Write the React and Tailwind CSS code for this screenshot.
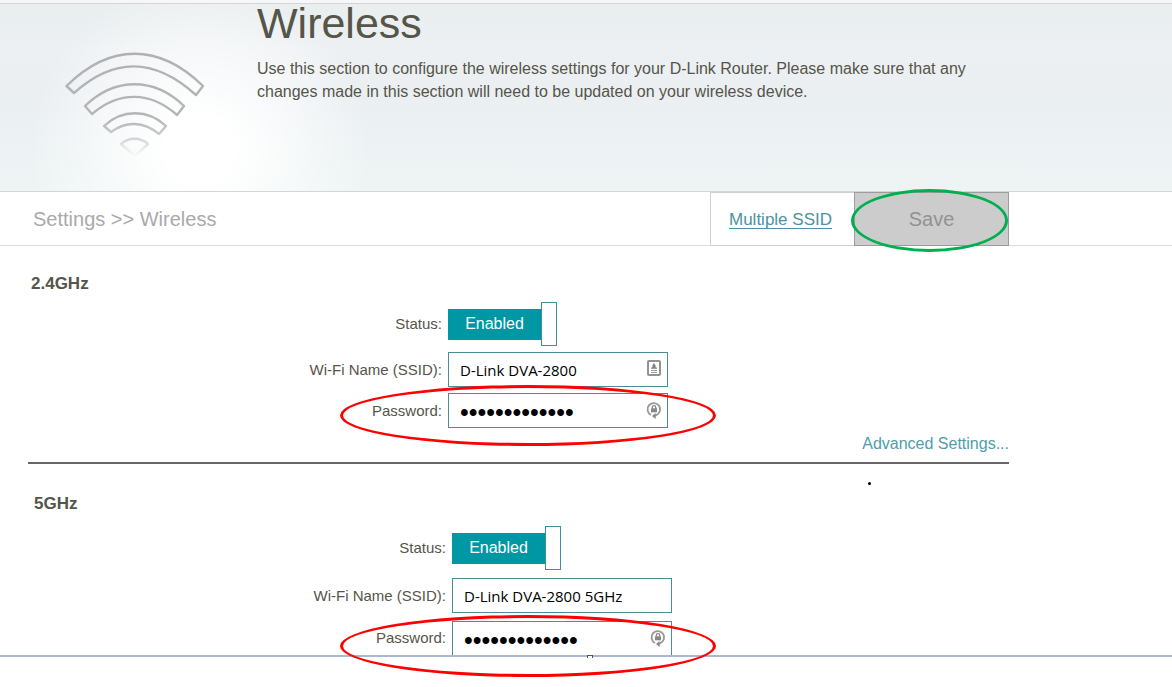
import React, { useState } from "react";

const WifiIcon = () => (
  <svg viewBox="0 0 144 110" className="w-36 h-[110px]" fill="none" aria-hidden="true">
    <defs>
      <linearGradient id="wifiFade" gradientUnits="userSpaceOnUse" x1="0" y1="0" x2="0" y2="108">
        <stop offset="0" stopColor="#b0b0b0" />
        <stop offset="0.65" stopColor="#b6b6b6" />
        <stop offset="0.8" stopColor="#cfcfcf" />
        <stop offset="1" stopColor="#ffffff" />
      </linearGradient>
    </defs>
    <g stroke="url(#wifiFade)" strokeWidth="2.4" strokeLinejoin="round">
      <path d="M4.500 36 C48 -7 97 -7 141 36 L134 45 C92 7 52 7 12 43 Z" />
      <path d="M23 56 C53 27 92 27 122 56 L115 65 C88 41 57 41 30 64 Z" />
      <path d="M42 76 C60 59 86 59 104 76 L97 84 C81 71 64 71 49 82 Z" />
      <path d="M59 94 C67 87 78 87 86 94 L73 106 Z" />
    </g>
  </svg>
);

const CardIcon = () => (
  <svg viewBox="0 0 14 16" className="w-3.5 h-4" fill="none" aria-hidden="true">
    <rect x="1" y="1" width="12" height="14" rx="1" stroke="#929292" strokeWidth="2" />
    <path d="M7 3 L8.600 5.500 V7.500 H10 V8.700 H4 V7.500 H5.400 V5.500 Z" fill="#808080" />
    <path d="M4 10.500 H10 M4 12.500 H10" stroke="#a0a0a0" />
  </svg>
);

const LockIcon = () => (
  <svg viewBox="0 0 16 18" className="w-4 h-[18px]" fill="none" aria-hidden="true">
    <path d="M5 14 A6.300 6.300 0 1 1 10 14.300 L8.500 15" stroke="#999" strokeWidth="1.9" />
    <path d="M6 15 L9.600 12 V18 Z" fill="#888" />
    <rect x="5" y="7.300" width="6" height="4" fill="#888" />
    <path d="M6.300 7.800 V6.300 A1.700 1.700 0 0 1 9.700 6.300 V7.800" stroke="#888" strokeWidth="1.3" />
  </svg>
);

const Ring = ({ className }) => (
  <span className={`absolute rounded-[50%] pointer-events-none z-10 ${className}`} />
);

const Row = ({ id, label, children }) => (
  <div className="relative flex items-center gap-1.5">
    <label htmlFor={id} className="w-[414px] shrink-0 text-right text-[15px] leading-5">
      {label}
    </label>
    {children}
  </div>
);

const Toggle = ({ id }) => {
  const [on, setOn] = useState(true);
  return (
    <button
      id={id}
      type="button"
      role="switch"
      aria-checked={on}
      onClick={() => setOn(!on)}
      className="flex items-center text-base text-white"
    >
      <span className="flex items-center justify-center w-[93px] h-[31px] bg-[#0097a5]">
        {on ? "Enabled" : "Disabled"}
      </span>
      <span className="w-4 h-11 bg-white border border-[#3f8f99]" />
    </button>
  );
};

const Field = ({ id, type = "text", value, icon: Icon, className }) => (
  <div className="relative w-[220px]">
    <input
      id={id}
      type={type}
      defaultValue={value}
      className={`block w-full pl-[11px] pr-8 bg-white text-black border-[#4f8b95] outline-none ${className}`}
    />
    {Icon && (
      <span className="absolute right-1.5 top-2 flex w-4 justify-center">
        <Icon />
      </span>
    )}
  </div>
);

const textField = "h-[35px] border font-['Open_Sans',sans-serif] text-[15px]";
const passField = "h-[35px] border pt-1 text-[25px]";
const passFieldCut = "h-[34px] border border-b-0 pt-1 text-[25px]";

export default function App() {
  return (
    <div className="bg-white text-[#55554a] font-['Liberation_Sans',Arial,sans-serif] overflow-x-hidden">
      <header className="border-t-[3px] border-[#f7f7fa]">
        <div className="flex border-y border-y-[#d3d5d6] bg-[radial-gradient(ellipse_170px_170px_at_200px_145px,#ffffff_20%,rgba(255,255,255,0)_100%),linear-gradient(#e9eeee,#edf0f3_25%,#ebeff2_50%,#eef4f4)] h-[189px]">
          <div className="w-[257px] shrink-0 pl-[62px] pt-[46px]">
            <WifiIcon />
          </div>
          <div className="max-w-[720px]">
            <h1 className="text-[43px] leading-[38px]">Wireless</h1>
            <p className="mt-[15px] text-base leading-[23px]">
              Use this section to configure the wireless settings for your D-Link Router. Please make sure that any
              changes made in this section will need to be updated on your wireless device.
            </p>
          </div>
        </div>
      </header>

      <div className="border-b border-[#dcdcdc]">
        <div className="flex items-stretch max-w-[1009px] h-[54px] -mb-px">
          <nav className="flex-1 pl-[33px] self-center text-xl text-[#aaaaaa]">Settings &gt;&gt; Wireless</nav>
          <div className="flex items-center w-36 pl-[18px] pt-0.5 border border-r-0 border-[#d0d0d0]">
            <a href="#multiple" className="text-[17px] text-[#4c93a0] underline underline-offset-3 [text-decoration-skip-ink:none]">
              Multiple SSID
            </a>
          </div>
          <div className="relative w-[155px]">
            <button type="button" className="w-full h-full bg-[#cccccc] border border-[#9c9c9c] text-xl text-[#929292]">
              Save
            </button>
            <Ring className="-left-[3px] right-px -top-[3px] -bottom-1.5 border-3 border-[#00b050]" />
          </div>
        </div>
      </div>

      <main className="max-w-[1009px] pl-7">
        <section className="pt-7">
          <h2 className="pl-[3px] text-[17px] leading-5 font-bold">2.4GHz</h2>
          <form className="flex flex-col gap-1.5 pt-2">
            <Row id="status24" label="Status:">
              <Toggle id="status24" />
            </Row>
            <Row id="ssid24" label="Wi-Fi Name (SSID):">
              <Field id="ssid24" value="D-Link DVA-2800" icon={CardIcon} className={textField} />
            </Row>
            <Row id="pass24" label="Password:">
              <Field id="pass24" type="password" value="wirelesspass1" icon={LockIcon} className={passField} />
              <Ring className="left-[312px] w-[376px] -top-2 h-[61px] border-3 border-[#ff0000]" />
            </Row>
          </form>
          <div className="flex justify-end pt-1">
            <a href="#advanced" className="text-base leading-6 text-[#4f9dab]">
              Advanced Settings...
            </a>
          </div>
          <hr className="mt-1.5 border-t-2 border-[#666666]" />
        </section>

        <section className="relative pt-[30px] pl-1">
          <span className="absolute left-[840px] top-[18px] size-[3px] rounded-full bg-black" />
          <h2 className="pl-0.5 text-[17px] leading-5 font-bold">5GHz</h2>
          <form className="flex flex-col gap-2 pt-3">
            <Row id="status5" label="Status:">
              <Toggle id="status5" />
            </Row>
            <Row id="ssid5" label="Wi-Fi Name (SSID):">
              <Field id="ssid5" value="D-Link DVA-2800 5GHz" className={textField} />
            </Row>
            <Row id="pass5" label="Password:">
              <Field id="pass5" type="password" value="wirelesspass1" icon={LockIcon} className={passFieldCut} />
              <Ring className="left-[308px] w-[376px] -top-1.5 h-[62px] border-3 border-[#ff0000]" />
            </Row>
          </form>
        </section>
      </main>

      <footer className="relative h-[30px] border-t-2 border-[#a9b8cf]">
        <span className="absolute left-[587px] -top-0.5 w-1.5 h-[3px] border border-b-0 border-[#555555] bg-white" />
      </footer>
    </div>
  );
}
